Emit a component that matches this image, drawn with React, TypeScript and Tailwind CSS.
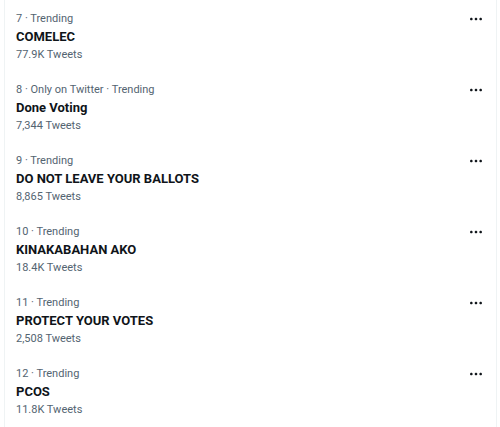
const trends = [
  { rank: 7, context: "Trending", title: "COMELEC", count: "77.9K Tweets" },
  { rank: 8, context: "Only on Twitter · Trending", title: "Done Voting", count: "7,344 Tweets" },
  { rank: 9, context: "Trending", title: "DO NOT LEAVE YOUR BALLOTS", count: "8,865 Tweets" },
  { rank: 10, context: "Trending", title: "KINAKABAHAN AKO", count: "18.4K Tweets" },
  { rank: 11, context: "Trending", title: "PROTECT YOUR VOTES", count: "2,508 Tweets" },
  { rank: 12, context: "Trending", title: "PCOS", count: "11.8K Tweets" },
];

function MoreIcon() {
  return (
    <svg viewBox="0 0 24 24" className="size-4 fill-[#0f1419]" aria-hidden="true">
      <path d="M3 12c0-1.1.9-2 2-2s2 .9 2 2-.9 2-2 2-2-.9-2-2zm9 2c1.1 0 2-.9 2-2s-.9-2-2-2-2 .9-2 2 .9 2 2 2zm7 0c1.1 0 2-.9 2-2s-.9-2-2-2-2 .9-2 2 .9 2 2 2z" />
    </svg>
  );
}

export default function App() {
  return (
    <div className="h-[427px] w-[500px] overflow-hidden bg-white font-['Roboto',Arial,sans-serif]">
      <div className="ml-[4px] h-full w-[493px] border-x border-[#eff3f4]">
        {trends.map((t) => (
          <div key={t.rank} className="flex h-[71px] items-start justify-between pl-[11px] pr-[12px] pt-[11px]">
            <div className="flex flex-col">
              <p className="text-[11px] leading-4 text-[#536471]">
                {t.rank} · {t.context}
              </p>
              <p className="text-[13px] font-bold leading-5 text-[#0f1419]">{t.title}</p>
              <p className="text-[11px] leading-4 text-[#536471]">{t.count}</p>
            </div>
            <MoreIcon />
          </div>
        ))}
      </div>
    </div>
  );
}
